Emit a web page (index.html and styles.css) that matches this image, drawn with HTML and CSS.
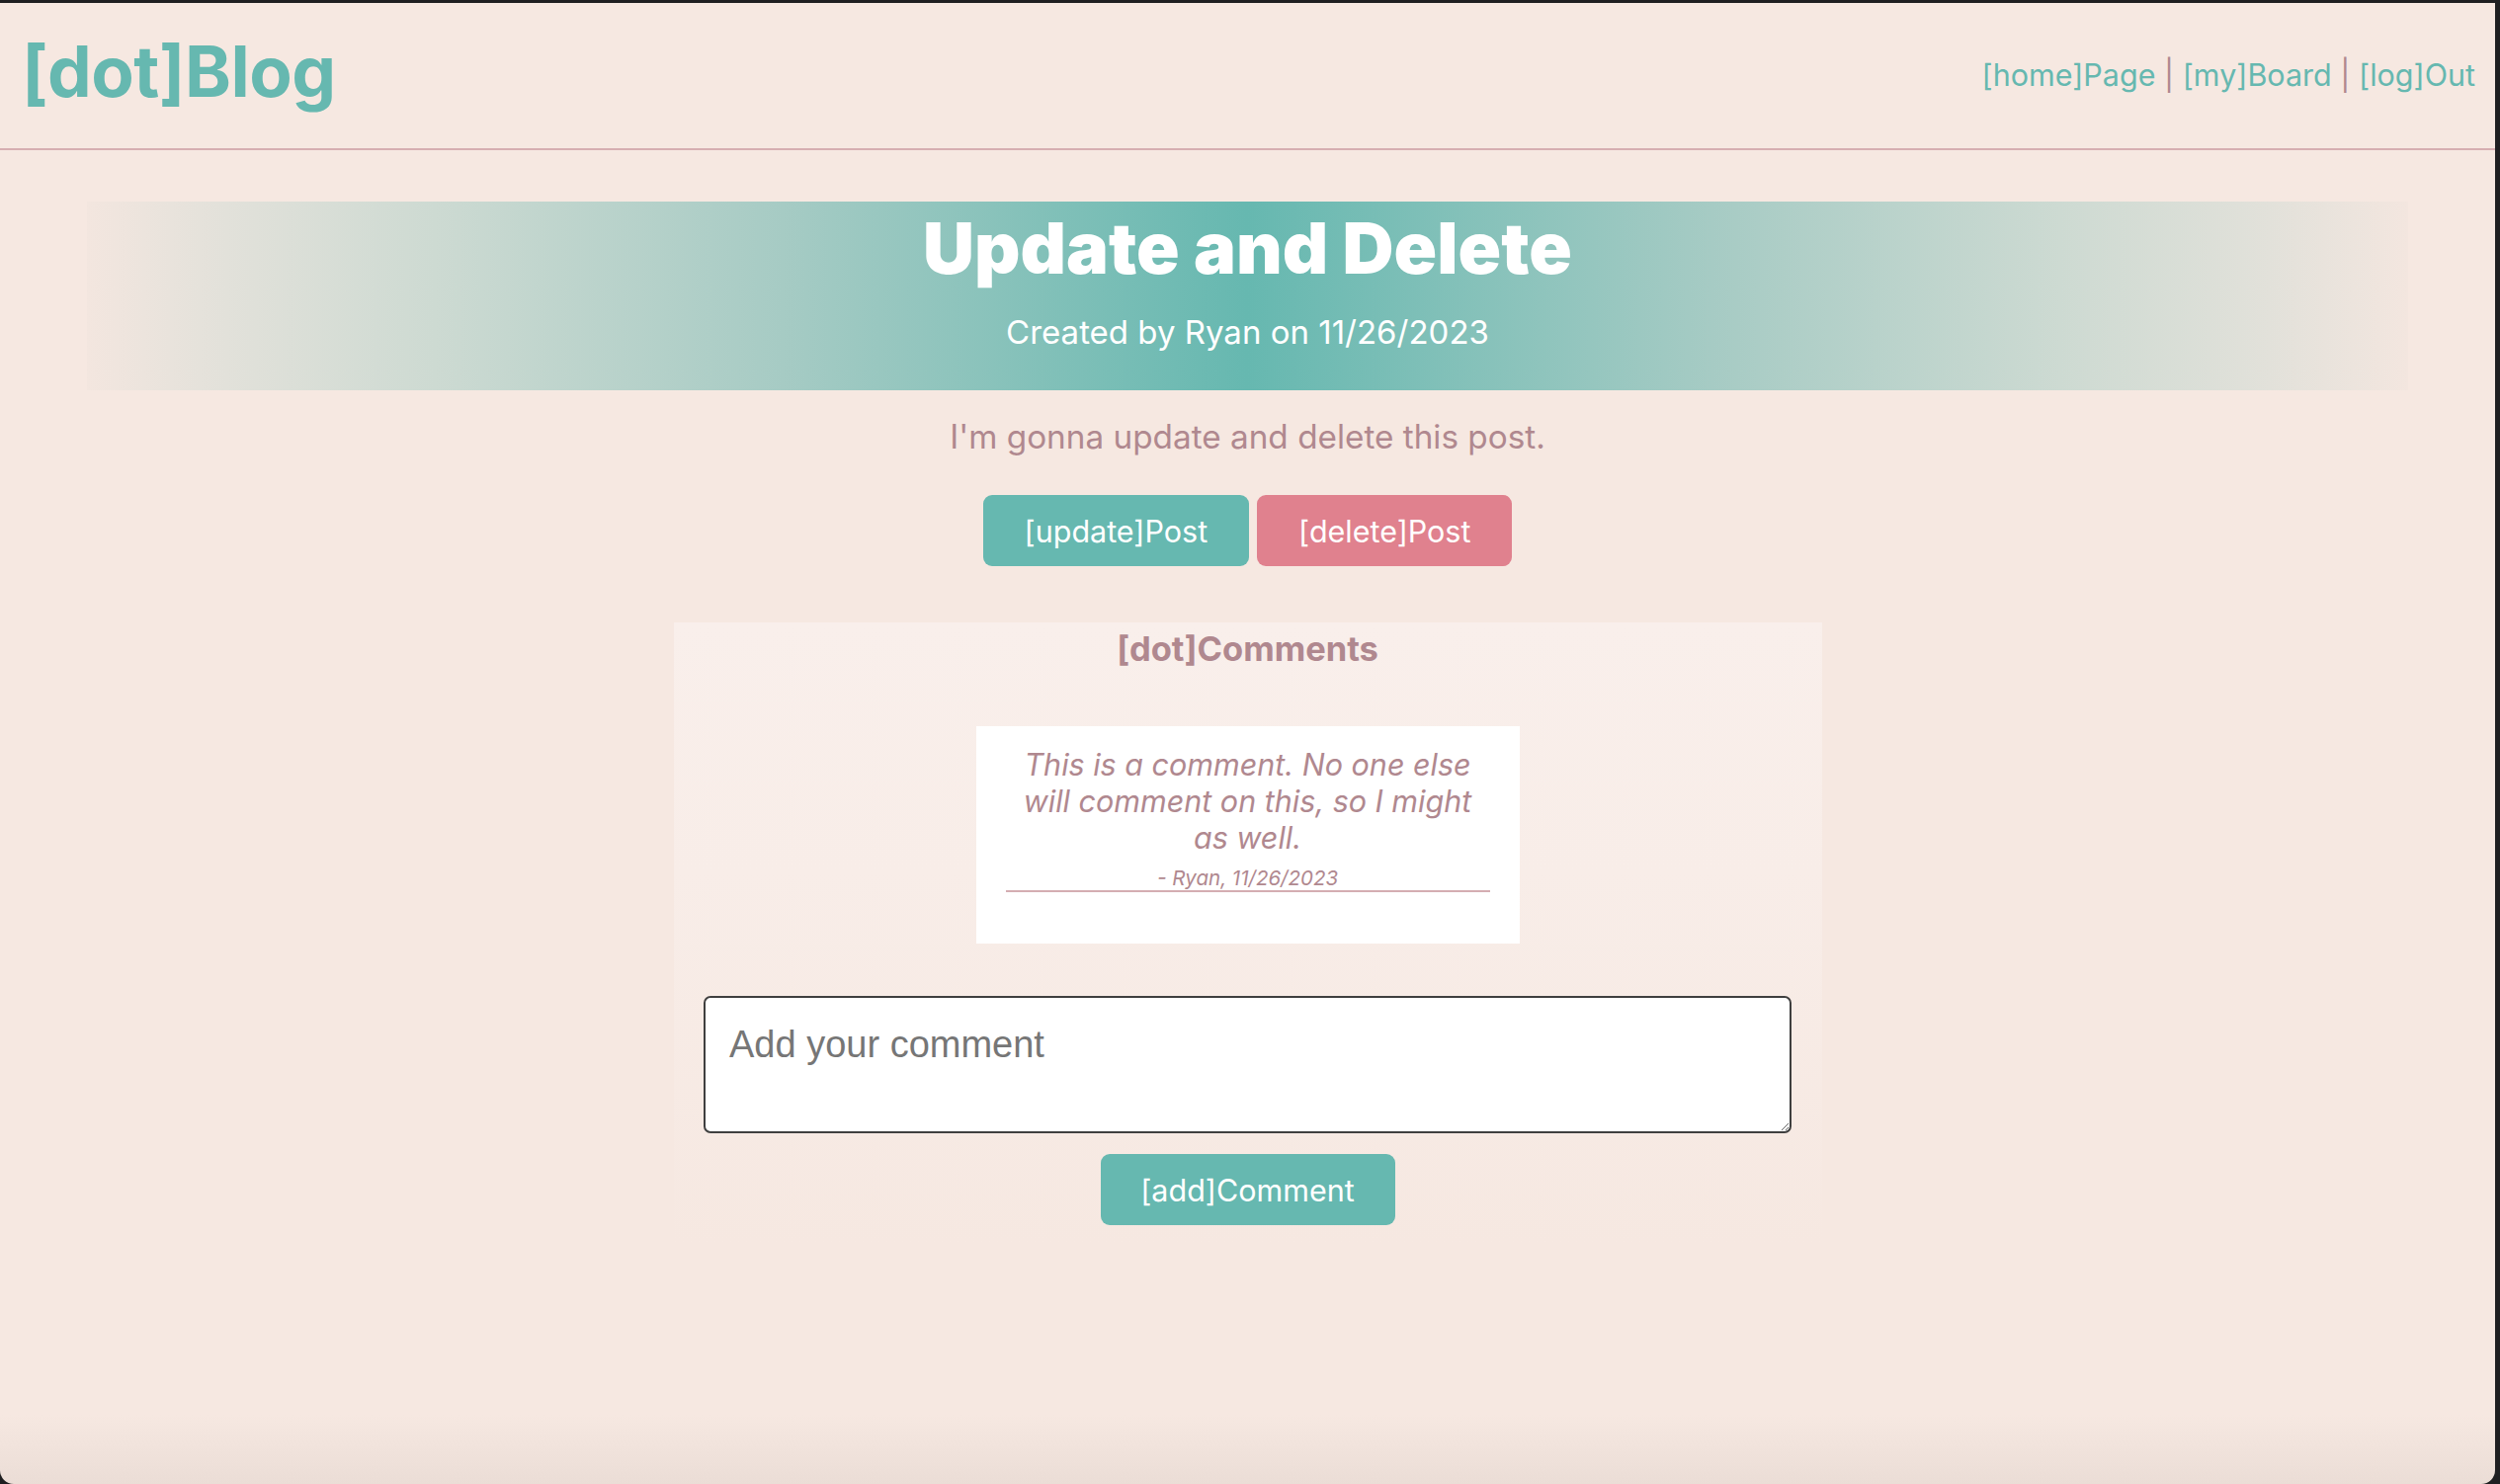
FILE: index.html
```html
<!DOCTYPE html>
<html lang="en">
<head>
<meta charset="utf-8">
<title>[dot]Blog - Update and Delete</title>
<link rel="stylesheet" href="styles.css">
</head>
<body>
<div class="window">
  <header class="site-header">
    <a class="logo" href="#">[dot]Blog</a>
    <nav class="nav">
      <a href="#">[home]Page</a> <span class="sep">|</span> <a href="#">[my]Board</a> <span class="sep">|</span> <a href="#">[log]Out</a>
    </nav>
  </header>

  <main class="content">
    <section class="banner">
      <h1 class="banner-title">Update and Delete</h1>
      <p class="banner-sub">Created by Ryan on 11/26/2023</p>
    </section>

    <p class="post-body">I'm gonna update and delete this post.</p>

    <div class="post-actions">
      <button class="btn btn-teal" type="button">[update]Post</button>
      <button class="btn btn-pink" type="button">[delete]Post</button>
    </div>

    <section class="comments">
      <h2 class="comments-title">[dot]Comments</h2>
      <div class="comment-card">
        <p class="comment-text">This is a comment. No one else will comment on this, so I might as well.</p>
        <p class="comment-meta">- Ryan, 11/26/2023</p>
      </div>
      <form class="comment-form">
        <textarea class="comment-input" placeholder="Add your comment"></textarea>
        <button class="btn btn-teal btn-add" type="button">[add]Comment</button>
      </form>
    </section>
  </main>
</div>
</body>
</html>
```

FILE: styles.css
```css
* { box-sizing: border-box; }

html, body {
  margin: 0;
  padding: 0;
  height: 100%;
}

body {
  background: #1f1f21;
  font-family: Inter, "Noto Sans", sans-serif;
  overflow: hidden;
}

.window {
  margin-top: 3px;
  width: 2525px;
  height: 1499px;
  border-radius: 0 0 14px 14px;
  background: linear-gradient(to bottom, #f6e8e1 0, #f6e8e1 calc(100% - 70px), #ebddd6 100%);
  overflow: hidden;
}

.site-header {
  display: flex;
  align-items: center;
  justify-content: space-between;
  height: 149px;
  padding: 0 20px 0 22px;
  border-bottom: 2px solid #d6aeb1;
}

.logo {
  font-size: 71px;
  font-weight: 700;
  color: #66b8b0;
  text-decoration: none;
  letter-spacing: -0.5px;
  margin-top: -10px;
}

.nav {
  font-size: 30.5px;
  margin-top: -2px;
  white-space: pre;
  color: #b0888f;
}

.nav a {
  color: #66b8b0;
  text-decoration: none;
}

.nav .sep {
  color: #b0888f;
}

.content {
  display: flex;
  flex-direction: column;
  align-items: center;
  padding-top: 52px;
}

.banner {
  width: 93%;
  height: 191px;
  background: linear-gradient(90deg, #f3e6df 0%, #e2e1da 6%, #cddad2 15%, #a6cbc4 30%, #66b8b0 50%, #a6cbc4 70%, #cddad2 85%, #e2e1da 94%, #f3e6df 100%);
  display: flex;
  flex-direction: column;
  align-items: center;
  color: #fff;
}

.banner-title {
  margin: 0;
  padding-top: 4px;
  font-size: 72px;
  font-weight: 900;
  line-height: 86px;
}

.banner-sub {
  margin: 0;
  padding-top: 22px;
  font-size: 33px;
  line-height: 40px;
}

.post-body {
  margin: 25px 0 0;
  font-size: 33.3px;
  line-height: 44px;
  color: #b0888f;
}

.post-actions {
  display: flex;
  gap: 8px;
  margin-top: 37px;
}

.btn {
  border: none;
  border-radius: 9px;
  color: #fff;
  font-family: Inter, "Noto Sans", sans-serif;
  font-size: 30.5px;
  height: 72px;
  padding: 0 42px;
  cursor: pointer;
}

.btn-teal { background: #66b8b0; }
.btn-pink { background: #e0818e; }

.comments {
  width: 1162px;
  margin-top: 57px;
  background: linear-gradient(to bottom, #f9efeb 0%, #f8ede8 40%, #f6e8e1 100%);
  display: flex;
  flex-direction: column;
  align-items: center;
  padding-bottom: 20px;
}

.comments-title {
  margin: 0;
  padding-top: 5px;
  font-size: 34.5px;
  font-weight: 700;
  line-height: 44px;
  color: #b0888f;
}

.comment-card {
  width: 550px;
  margin-top: 56px;
  background: #fff;
  padding: 20px 30px 52px;
  text-align: center;
  color: #b0888f;
  font-style: italic;
}

.comment-text {
  margin: 0 8px;
  font-size: 30.5px;
  line-height: 37px;
}

.comment-meta {
  margin: 11px 0 0;
  font-size: 20.5px;
  line-height: 24px;
  padding-bottom: 0;
  border-bottom: 2px solid #d4adb2;
}

.comment-form {
  display: flex;
  flex-direction: column;
  align-items: center;
  width: 100%;
}

.comment-input {
  display: block;
  width: 1101px;
  height: 139px;
  margin-top: 53px;
  border: 2px solid #3f3f3f;
  border-radius: 7px;
  background: #fff;
  padding: 26px 24px 14px;
  font-family: "Liberation Sans", Arial, sans-serif;
  font-size: 38px;
  color: #333;
  resize: vertical;
}

.comment-input::placeholder {
  color: #767676;
}

.btn-add {
  margin-top: 21px;
  width: 298px;
  padding: 0;
}
```
